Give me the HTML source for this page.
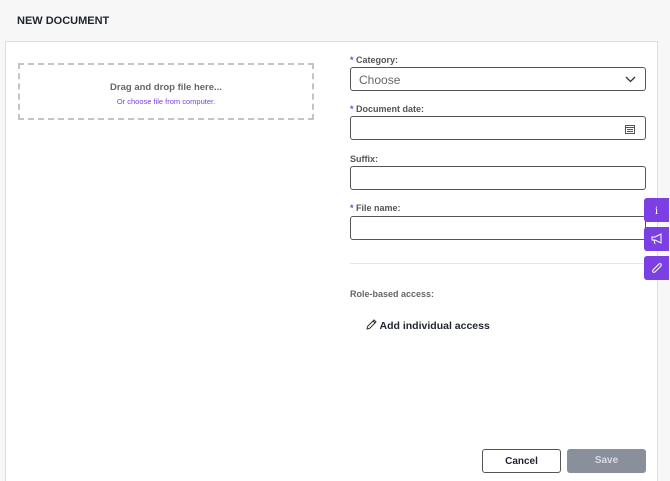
<!DOCTYPE html><html><head><style>
html,body{margin:0;width:670px;height:481px;overflow:hidden}
body{background:#f7f7f7;font-family:"Liberation Sans",sans-serif;position:relative}
.a{position:absolute}
.t{font-size:11px;font-weight:bold;color:#1f2430;left:17px;top:15px}
.panel{left:5px;top:41px;width:653px;height:445px;background:#fff;border:1px solid #ddd;box-sizing:border-box}
.drop{left:18px;top:63px;width:296px;height:57px;border:2px dashed #c4c4c4;box-sizing:border-box;text-align:center}
.lbl{font-size:9px;font-weight:bold;color:#555;left:350px}
.lbl b{color:#7b3fe4}
.inp{left:350px;width:296px;height:24px;border:1px solid #555;border-radius:3px;box-sizing:border-box;background:#fff}
.side{left:644px;width:25px;height:24px;background:#7b3fe4;border-radius:3px 0 0 3px;color:#fff;text-align:center}
.btn{top:449px;width:79px;height:24px;box-sizing:border-box;border-radius:3px;font-size:10px;font-weight:bold;text-align:center;line-height:23px}
</style></head><body>
<div class="a t">NEW DOCUMENT</div>
<div class="a panel"></div>
<div class="a drop"><div style="font-size:9.5px;font-weight:bold;color:#666;margin-top:17px">Drag and drop file here...</div><div style="font-size:7.5px;color:#7b3fe4;margin-top:4px">Or choose file from computer.</div></div>
<div class="a lbl" style="top:55px"><b>*</b> Category:</div>
<div class="a inp" style="top:67px"><span style="position:absolute;left:8px;top:5px;font-size:12px;color:#666">Choose</span><svg class="a" style="right:9px;top:8px" width="11" height="7" viewBox="0 0 11 7"><path d="M1 1l4.5 4.5L10 1" stroke="#333" stroke-width="1.3" fill="none"/></svg></div>
<div class="a lbl" style="top:104px"><b>*</b> Document date:</div>
<div class="a inp" style="top:116px"><svg class="a" style="right:10px;top:7px" width="10" height="10" viewBox="0 0 10 10"><rect x="0.5" y="1.5" width="9" height="8" fill="none" stroke="#555"/><path d="M0.5 3.5h9M2 5.5h6M2 7.5h6" stroke="#555"/></svg></div>
<div class="a lbl" style="top:154px">Suffix:</div>
<div class="a inp" style="top:166px"></div>
<div class="a lbl" style="top:203px"><b>*</b> File name:</div>
<div class="a inp" style="top:216px"></div>
<div class="a" style="left:350px;top:263px;width:296px;height:1px;background:#e6e6e6"></div>
<div class="a lbl" style="top:289px;color:#666">Role-based access:</div>
<div class="a" style="left:366px;top:319px;font-size:10.5px;font-weight:bold;color:#1f2430"><svg width="11" height="11" viewBox="0 0 11 11" style="vertical-align:-1px"><path d="M1 10l.6-2.6L8 1l2 2-6.4 6.4zM7 2l2 2" stroke="#333" fill="none"/></svg> Add individual access</div>
<div class="a side" style="top:198px;font-size:12px;line-height:24px;font-family:'Liberation Serif',serif">i</div>
<div class="a side" style="top:227px"><svg width="12" height="12" viewBox="0 0 12 12" style="margin-top:6px"><path d="M1 4h3l6-3v9L4 7H1zM3 7l1 4" stroke="#fff" fill="none"/></svg></div>
<div class="a side" style="top:256px"><svg width="12" height="12" viewBox="0 0 12 12" style="margin-top:6px"><path d="M2 10c-1-1 0-2 1-3l4-4c1-1 2-2 3-1s0 2-1 3L5 9c-1 1-2 2-3 1z" stroke="#fff" fill="none"/></svg></div>
<div class="a btn" style="left:482px;border:1px solid #555;color:#1f2430;background:#fff">Cancel</div>
<div class="a btn" style="left:567px;background:#8a8f9c;color:#d8dae0;line-height:24px">Save</div>
</body></html>
